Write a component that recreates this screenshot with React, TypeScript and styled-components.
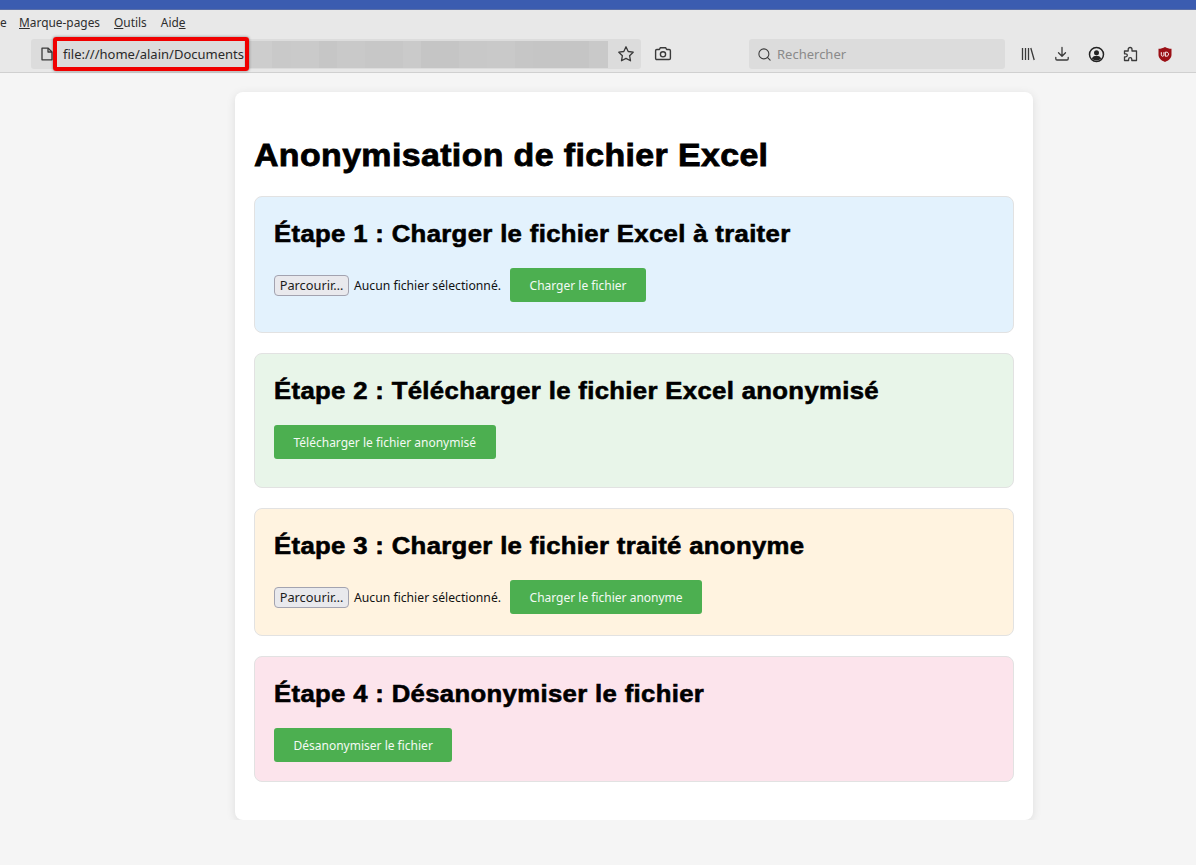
import styled, { createGlobalStyle } from "styled-components";
import { Search } from "lucide-react";

const UI_FONT = `"Noto Sans", "Open Sans", sans-serif`;

const steps = [
  { title: "Étape 1 : Charger le fichier Excel à traiter", bg: "#e3f2fd", hasFile: true, action: "Charger le fichier", height: 137 },
  { title: "Étape 2 : Télécharger le fichier Excel anonymisé", bg: "#e8f5e9", hasFile: false, action: "Télécharger le fichier anonymisé", height: 135 },
  { title: "Étape 3 : Charger le fichier traité anonyme", bg: "#fff3e0", hasFile: true, action: "Charger le fichier anonyme", height: 128 },
  { title: "Étape 4 : Désanonymiser le fichier", bg: "#fce4ec", hasFile: false, action: "Désanonymiser le fichier", height: 126 },
];

const blurBlocks = [
  { color: "#cdcdcd", size: 3 },
  { color: "#c9c9c9", size: 2 },
  { color: "#cacaca", size: 3 },
  { color: "#c6c6c6", size: 2 },
  { color: "#c9c9c9", size: 3 },
  { color: "#c7c7c7", size: 4 },
  { color: "#cacaca", size: 2 },
  { color: "#c5c5c5", size: 4 },
  { color: "#c8c8c8", size: 3 },
  { color: "#c9c9c9", size: 3 },
  { color: "#c6c6c6", size: 2 },
  { color: "#c5c5c5", size: 6 },
  { color: "#c9c9c9", size: 2 },
];

const App = () => {
  return (
    <>
      <GlobalStyle />
      <TitleBar />
      <MenuBar>
        <ClippedItem>e</ClippedItem>
        <MenuItem><u>M</u>arque-pages</MenuItem>
        <MenuItem><u>O</u>utils</MenuItem>
        <MenuItem>Aid<u>e</u></MenuItem>
      </MenuBar>
      <Toolbar>
        <UrlBar>
          <PageIcon width="14" height="14" viewBox="0 0 14 14" fill="none" stroke="#3a3a3a" strokeWidth="1.3" strokeLinejoin="round">
            <path d="M2 1.2h6.2L12 5v7.8H2z" />
            <path d="M8 1.2V5h4" />
          </PageIcon>
          <UrlText>file:///home/alain/Documents</UrlText>
          <Blur>
            {blurBlocks.map((block, i) => (
              <BlurBlock key={i} style={{ background: block.color, flexGrow: block.size }} />
            ))}
          </Blur>
          <StarIcon width="18" height="18" viewBox="0 0 18 18" fill="none" stroke="#3a3a3a" strokeWidth="1.3" strokeLinejoin="round">
            <path d="M9 1.8l2.2 4.7 5 .7-3.6 3.5.9 5.1L9 13.4l-4.5 2.4.9-5.1L1.8 7.2l5-.7z" />
          </StarIcon>
        </UrlBar>
        <CameraIcon width="18" height="18" viewBox="0 0 18 18" fill="none" stroke="#3a3a3a" strokeWidth="1.4" strokeLinejoin="round">
          <path d="M2.8 4.5h2.6l1-1.8h5.2l1 1.8h2.6c.7 0 1.2.5 1.2 1.2v7.6c0 .7-.5 1.2-1.2 1.2H2.8c-.7 0-1.2-.5-1.2-1.2V5.700c0-.7.5-1.200 1.200-1.200z" />
          <circle cx="9" cy="9.300" r="2.600" />
        </CameraIcon>
        <SearchBox>
          <Search size={15} color="#3a3a3a" strokeWidth={1.7} />
          <SearchText>Rechercher</SearchText>
        </SearchBox>
        <ToolIcons>
          <svg width="16" height="16" viewBox="0 0 16 16" fill="none" stroke="#3a3a3a" strokeWidth="1.3">
            <path d="M2.500 2v12M5.500 2v12M8.500 2v12M10.800 2l3.400 12" />
          </svg>
          <svg width="16" height="16" viewBox="0 0 16 16" fill="none" stroke="#3a3a3a" strokeWidth="1.3" strokeLinecap="round" strokeLinejoin="round">
            <path d="M8 1.500v8.500M4.500 6.800 8 10.300l3.500-3.500M1.800 11.500v1.300c0 .7.500 1.200 1.200 1.200h10c.7 0 1.200-.5 1.200-1.200v-1.300" />
          </svg>
          <svg width="17" height="17" viewBox="0 0 17 17" fill="none" stroke="#222" strokeWidth="1.5">
            <circle cx="8.500" cy="8.500" r="7" />
            <circle cx="8.500" cy="6.800" r="2.500" fill="#222" stroke="none" />
            <path d="M3.800 12.400c1-1.900 2.700-2.600 4.700-2.600s3.700.7 4.700 2.600c-1.200 1.300-2.900 2-4.700 2s-3.500-.7-4.700-2z" fill="#222" stroke="none" />
          </svg>
          <svg width="16" height="16" viewBox="0 0 16 16" fill="none" stroke="#3a3a3a" strokeWidth="1.3" strokeLinejoin="round">
            <path d="M1.500 14.500V10.800h1.300a1.500 1.500 0 0 0 0-3H1.500V5h3.700V3.400a1.900 1.900 0 0 1 3.800 0V5h4.500v9.500H8.800v-1.300a1.600 1.600 0 0 0-3.200 0v1.300z" />
          </svg>
          <svg width="16" height="17" viewBox="0 0 16 17">
            <path d="M8 1c2 1.200 4 1.700 6.500 1.800v6c0 3.200-2.600 5.800-6.500 7.200-3.900-1.400-6.500-4-6.500-7.200v-6C4 2.700 6 2.200 8 1z" fill="#9b1016" />
            <path d="M4.300 6.200v2.500c0 1 .5 1.500 1.300 1.500s1.300-.5 1.300-1.500V6.200M8.300 6.200v4h1.200c1.300 0 2-.8 2-2s-.7-2-2-2z" fill="none" stroke="#fff" strokeWidth="1" />
          </svg>
        </ToolIcons>
        <Highlight />
      </Toolbar>
      <Page>
        <Card>
          <Heading>Anonymisation de fichier Excel</Heading>
          <Sections>
            {steps.map((step) => (
              <Section key={step.title} $bg={step.bg} $height={step.height}>
                <SectionTitle>{step.title}</SectionTitle>
                <Row>
                  {step.hasFile && (
                    <>
                      <BrowseButton>Parcourir…</BrowseButton>
                      <NoFile>Aucun fichier sélectionné.</NoFile>
                    </>
                  )}
                  <ActionButton>{step.action}</ActionButton>
                </Row>
              </Section>
            ))}
          </Sections>
        </Card>
      </Page>
    </>
  );
};

const GlobalStyle = createGlobalStyle`
  html, body {
    margin: 0;
    padding: 0;
    background: #f5f5f5;
    overflow: hidden;
  }
  * {
    box-sizing: border-box;
  }
`;

const TitleBar = styled.div`
  height: 10px;
  background: #3b5cb0;
  border-bottom: 1px solid #5a6fa8;
`;

const MenuBar = styled.div`
  height: 26px;
  background: #e8e8e8;
  display: flex;
  align-items: center;
  padding-bottom: 3px;
  font-family: ${UI_FONT};
  font-size: 11.900px;
  color: #2e2e2e;
`;

const ClippedItem = styled.span`
  width: 19px;
`;

const MenuItem = styled.span`
  margin-right: 14px;
`;

const Toolbar = styled.div`
  position: relative;
  height: 37px;
  background: #e8e8e8;
  border-bottom: 1px solid #d0d0d0;
  display: flex;
  align-items: center;
  padding: 0 0 0 31px;
  font-family: ${UI_FONT};
`;

const UrlBar = styled.div`
  width: 610px;
  height: 30px;
  background: #dcdcdc;
  border-radius: 3px;
  display: flex;
  align-items: center;
  position: relative;
  padding-left: 9px;
`;

const PageIcon = styled.svg`
  flex: none;
`;

const UrlText = styled.span`
  margin-left: 9px;
  font-size: 13px;
  color: #2a2a2a;
  white-space: nowrap;
`;

const Blur = styled.div`
  flex: 1;
  height: 27px;
  display: flex;
  background: #c8c8c8;
  margin-right: 33px;
`;

const BlurBlock = styled.div`
  flex: 1;
`;

const StarIcon = styled.svg`
  position: absolute;
  right: 6px;
  top: 6px;
`;

const CameraIcon = styled.svg`
  margin-left: 13px;
  flex: none;
`;

const SearchBox = styled.div`
  width: 256px;
  height: 30px;
  margin-left: 77px;
  background: #dcdcdc;
  border-radius: 3px;
  display: flex;
  align-items: center;
  padding-left: 8px;
  gap: 5px;
`;

const SearchText = styled.span`
  font-size: 13px;
  color: #8a8a8a;
`;

const ToolIcons = styled.div`
  display: flex;
  align-items: center;
  gap: 18px;
  margin-left: 15px;
`;

const Highlight = styled.div`
  position: absolute;
  left: 53px;
  top: 1px;
  width: 196px;
  height: 34px;
  border: 4px solid #f00000;
  border-radius: 3px;
  box-shadow: 0 0 3px rgba(0, 0, 0, 0.45);
`;

const Page = styled.main`
  padding: 19px 0 0 235px;
`;

const Card = styled.div`
  width: 798px;
  height: 728px;
  background: #fff;
  border-radius: 8px;
  box-shadow: 0 2px 10px rgba(0, 0, 0, 0.1);
  padding: 0 19px;
`;

const Heading = styled.h1`
  margin: 0;
  padding: 45px 0 0;
  height: 104px;
  font-family: "Liberation Sans", Arial, sans-serif;
  font-size: 32px;
  line-height: 37px;
  font-weight: 700;
  color: #000;
  -webkit-text-stroke: 0.8px #000;
  letter-spacing: 0.35px;
  white-space: nowrap;
  transform: scaleX(1.06);
  transform-origin: left center;
`;

const Sections = styled.div`
  display: flex;
  flex-direction: column;
  gap: 20px;
`;

const Section = styled.section<{ $bg: string; $height: number }>`
  background: ${({ $bg }) => $bg};
  padding: 22px 19px 0;
  height: ${({ $height }) => $height}px;
  border: 1px solid #e2e2e2;
  border-radius: 8px;
`;

const SectionTitle = styled.h2`
  margin: 0 0 19px;
  font-family: "Liberation Sans", Arial, sans-serif;
  font-size: 24px;
  line-height: 30px;
  font-weight: 700;
  color: #000;
  -webkit-text-stroke: 0.6px #000;
  letter-spacing: 0.33px;
  white-space: nowrap;
  transform: scaleX(1.07);
  transform-origin: left center;
`;

const Row = styled.div`
  display: flex;
  align-items: center;
  font-family: ${UI_FONT};
  font-size: 12.200px;
`;

const BrowseButton = styled.button`
  width: 75px;
  height: 21px;
  padding: 0;
  background: #e9e9ed;
  border: 1px solid #a3a3b0;
  border-radius: 4px;
  font-family: inherit;
  font-size: 12.800px;
  color: #1c1c1c;
`;

const NoFile = styled.span`
  margin: 0 9px 0 5px;
  color: #111;
  white-space: nowrap;
`;

const ActionButton = styled.button`
  height: 34px;
  padding: 0 19.500px;
  background: #4caf50;
  border: none;
  border-radius: 3px;
  color: #f4faf4;
  font-family: inherit;
  font-size: 12px;
  white-space: nowrap;
`;

export default App;
